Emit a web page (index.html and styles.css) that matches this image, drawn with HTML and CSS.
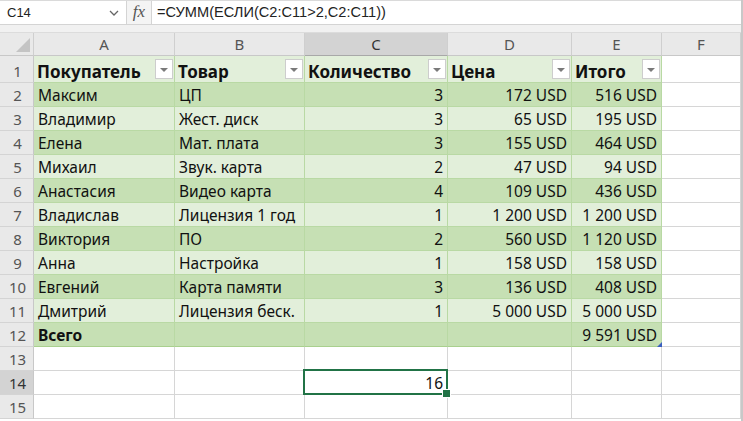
FILE: index.html
```html
<!DOCTYPE html>
<html lang="ru">
<head>
<meta charset="utf-8">
<link rel="stylesheet" href="styles.css">
</head>
<body>
<div class="app">
  <div class="fbar">
    <div class="namebox">
      <span class="ref">C14</span>
      <svg class="chev" width="10" height="6" viewBox="0 0 10 6"><polyline points="1,1 5,5 9,1" fill="none" stroke="#666" stroke-width="1.3"/></svg>
    </div>
    <div class="fx">fx</div>
    <div class="formula">=СУММ(ЕСЛИ(C2:C11&gt;2,C2:C11))</div>
  </div>
  <div class="band"></div>
  <div class="sheet">
    <div class="ch corner"><svg width="14" height="14" viewBox="0 0 14 14"><polygon points="14,0 14,14 0,14" fill="#c4c4c4"/></svg></div>
    <div class="ch">A</div><div class="ch">B</div><div class="ch sel">C</div><div class="ch">D</div><div class="ch">E</div><div class="ch">F</div>

    <div class="rh r1">1</div>
    <div class="c th"><span>Покупатель</span><i class="fb"></i></div>
    <div class="c th"><span>Товар</span><i class="fb"></i></div>
    <div class="c th"><span>Количество</span><i class="fb"></i></div>
    <div class="c th"><span>Цена</span><i class="fb"></i></div>
    <div class="c th"><span>Итого</span><i class="fb"></i></div>
    <div class="c e"></div>

    <div class="rh">2</div><div class="c d">Максим</div><div class="c d">ЦП</div><div class="c d n">3</div><div class="c d n">172 USD</div><div class="c d n">516 USD</div><div class="c e"></div>
    <div class="rh">3</div><div class="c l">Владимир</div><div class="c l">Жест. диск</div><div class="c l n">3</div><div class="c l n">65 USD</div><div class="c l n">195 USD</div><div class="c e"></div>
    <div class="rh">4</div><div class="c d">Елена</div><div class="c d">Мат. плата</div><div class="c d n">3</div><div class="c d n">155 USD</div><div class="c d n">464 USD</div><div class="c e"></div>
    <div class="rh">5</div><div class="c l">Михаил</div><div class="c l">Звук. карта</div><div class="c l n">2</div><div class="c l n">47 USD</div><div class="c l n">94 USD</div><div class="c e"></div>
    <div class="rh">6</div><div class="c d">Анастасия</div><div class="c d">Видео карта</div><div class="c d n">4</div><div class="c d n">109 USD</div><div class="c d n">436 USD</div><div class="c e"></div>
    <div class="rh">7</div><div class="c l">Владислав</div><div class="c l">Лицензия 1 год</div><div class="c l n">1</div><div class="c l n">1 200 USD</div><div class="c l n">1 200 USD</div><div class="c e"></div>
    <div class="rh">8</div><div class="c d">Виктория</div><div class="c d">ПО</div><div class="c d n">2</div><div class="c d n">560 USD</div><div class="c d n">1 120 USD</div><div class="c e"></div>
    <div class="rh">9</div><div class="c l">Анна</div><div class="c l">Настройка</div><div class="c l n">1</div><div class="c l n">158 USD</div><div class="c l n">158 USD</div><div class="c e"></div>
    <div class="rh">10</div><div class="c d">Евгений</div><div class="c d">Карта памяти</div><div class="c d n">3</div><div class="c d n">136 USD</div><div class="c d n">408 USD</div><div class="c e"></div>
    <div class="rh">11</div><div class="c l">Дмитрий</div><div class="c l">Лицензия беск.</div><div class="c l n">1</div><div class="c l n">5 000 USD</div><div class="c l n">5 000 USD</div><div class="c e"></div>
    <div class="rh">12</div><div class="c d tot b">Всего</div><div class="c d tot"></div><div class="c d tot"></div><div class="c d tot"></div><div class="c d tot n corner-mark">9 591 USD</div><div class="c e"></div>

    <div class="rh">13</div><div class="c e"></div><div class="c e"></div><div class="c e"></div><div class="c e"></div><div class="c e"></div><div class="c e"></div>
    <div class="rh sel">14</div><div class="c e"></div><div class="c e"></div><div class="c e n active">16</div><div class="c e"></div><div class="c e"></div><div class="c e"></div>
    <div class="rh">15</div><div class="c e"></div><div class="c e"></div><div class="c e"></div><div class="c e"></div><div class="c e"></div><div class="c e"></div>
  </div>
</div>
</body>
</html>
```
FILE: styles.css
```css
* { box-sizing: border-box; }
html, body { margin: 0; padding: 0; background: #fff; }
body { font-family: "Noto Sans", "Open Sans", sans-serif; }

.app {
  width: 743px;
  height: 421px;
  overflow: hidden;
  border-right: 2px solid #c8c8c8;
}

.fbar {
  display: flex;
  height: 25px;
  border-top: 1px solid #dadada;
  border-bottom: 1px solid #d4d4d4;
  background: #fff;
}
.namebox {
  width: 127px;
  display: flex;
  align-items: center;
  justify-content: space-between;
  padding: 0 7px 0 7px;
  border-right: 1px solid #d4d4d4;
}
.ref {
  font-family: "Liberation Sans", Arial, sans-serif;
  font-size: 13px;
  color: #222;
}
.fx {
  width: 25px;
  background: #f4f4f4;
  border-right: 1px solid #d4d4d4;
  font-family: "Liberation Serif", "Times New Roman", serif;
  font-style: italic;
  font-size: 17px;
  color: #555;
  text-align: center;
  line-height: 22px;
}
.formula {
  flex: 1;
  padding-left: 5px;
  font-family: "Liberation Sans", Arial, sans-serif;
  font-size: 14.6px;
  color: #222;
  line-height: 23px;
}

.band {
  height: 8px;
  background: #f1f1f1;
  border-bottom: 1px solid #dcdcdc;
}

.sheet {
  display: grid;
  grid-template-columns: 34px 141px 130px 143px 124px 90px 79px;
  grid-template-rows: 23px 27px repeat(14, 24px);
}

.ch {
  background: #e9e9e9;
  border-right: 1px solid #cfcfcf;
  border-bottom: 1px solid #c8c8c8;
  color: #555;
  font-size: 15px;
  text-align: center;
  line-height: 22px;
}
.ch.sel { background: #d3d3d3; color: #333; border-bottom-color: #a8a8a8; }
.corner { display: flex; align-items: flex-end; justify-content: flex-end; padding: 0 3px 3px 0; background: #e9e9e9; }

.rh {
  background: #e9e9e9;
  border-right: 1px solid #c8c8c8;
  border-bottom: 1px solid #d4d4d4;
  color: #555;
  font-size: 15px;
  text-align: center;
  line-height: 22px;
  padding: 1px 0 0 2px;
}
.rh.r1 { padding-top: 4px; }
.rh.sel { background: #d3d3d3; color: #333; }

.c {
  font-size: 15.5px;
  color: #111;
  line-height: 22px;
  padding: 1px 4px 0;
  white-space: nowrap;
  overflow: hidden;
  border-right: 1px solid #b9d9a4;
  border-bottom: 1px solid #b9d9a4;
}
.c.n { text-align: right; }
.c.d { background: #c6e0b4; }
.c.l { background: #e2efda; }
.c.b { font-weight: 700; }
.c.e { background: #fff; border-right-color: #d6d6d6; border-bottom-color: #d6d6d6; }

.c.th {
  background: #e2efda;
  font-weight: 700;
  font-size: 17px;
  line-height: 21px;
  display: flex;
  justify-content: space-between;
  align-items: center;
  padding: 0 1px 0 3px;
  overflow: visible;
}
.c.th span { padding-top: 5px; }
.fb {
  width: 18px;
  height: 20px;
  background: #fff;
  border: 1px solid #cdcdcd;
  position: relative;
  flex: none;
  margin-top: -1px;
}
.fb::after {
  content: "";
  position: absolute;
  left: 4px;
  top: 8px;
  border-left: 4px solid transparent;
  border-right: 4px solid transparent;
  border-top: 4px solid #7a7a7a;
}

.tot { border-bottom-color: #a9d08e; }

.corner-mark { position: relative; overflow: visible; }
.corner-mark::after {
  content: "";
  position: absolute;
  right: -1px;
  bottom: -1px;
  width: 0;
  height: 0;
  border-left: 5px solid transparent;
  border-bottom: 5px solid #3b5fc0;
}

.active { position: relative; overflow: visible; }
.active::before {
  content: "";
  position: absolute;
  left: -2px;
  top: -2px;
  right: -1px;
  bottom: -1px;
  border: 2px solid #217346;
  pointer-events: none;
}
.active::after {
  content: "";
  position: absolute;
  right: -4px;
  bottom: -4px;
  width: 7px;
  height: 7px;
  background: #217346;
  border: 1px solid #fff;
}
```
